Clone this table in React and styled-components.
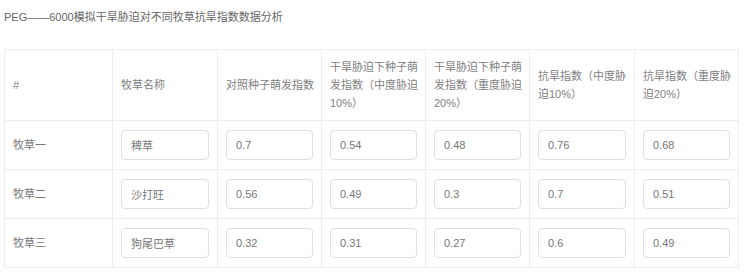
import React from "react";
import styled, { createGlobalStyle } from "styled-components";

const GlobalStyle = createGlobalStyle`
  body {
    margin: 0;
    background: #fff;
    font-family: "Liberation Sans", "Noto Sans CJK SC", sans-serif;
  }
`;

const headers = [
  "#",
  "牧草名称",
  "对照种子萌发指数",
  "干旱胁迫下种子萌发指数（中度胁迫10%）",
  "干旱胁迫下种子萌发指数（重度胁迫20%）",
  "抗旱指数（中度胁迫10%）",
  "抗旱指数（重度胁迫20%）",
];

const widths = [108, 105, 104, 104, 104, 105, 104];

const rows = [
  { label: "牧草一", values: ["稗草", "0.7", "0.54", "0.48", "0.76", "0.68"] },
  { label: "牧草二", values: ["沙打旺", "0.56", "0.49", "0.3", "0.7", "0.51"] },
  { label: "牧草三", values: ["狗尾巴草", "0.32", "0.31", "0.27", "0.6", "0.49"] },
];

function App() {
  return (
    <Page>
      <GlobalStyle />
      <Title>PEG——6000模拟干旱胁迫对不同牧草抗旱指数数据分析</Title>
      <Table>
        <colgroup>
          {widths.map((w, i) => (
            <col key={i} style={{ width: w }} />
          ))}
        </colgroup>
        <thead>
          <tr>
            {headers.map((h) => (
              <Th key={h}>{h}</Th>
            ))}
          </tr>
        </thead>
        <tbody>
          {rows.map(({ label, values }) => (
            <tr key={label}>
              <Td>{label}</Td>
              {values.map((v, i) => (
                <Td key={i}>
                  <Input defaultValue={v} />
                </Td>
              ))}
            </tr>
          ))}
        </tbody>
      </Table>
    </Page>
  );
}

export default App;

const Page = styled.div`
  padding: 8px 10px 0 4px;
`;

const Title = styled.div`
  font-size: 11px;
  line-height: 18px;
  color: #666;
  margin-bottom: 23px;
`;

const Table = styled.table`
  width: 735px;
  table-layout: fixed;
  border-collapse: collapse;
  font-size: 11px;
  color: #777;
`;

const Th = styled.th`
  border: 1px solid #ebedf0;
  padding: 8px 4px 8px 8px;
  line-height: 18px;
  height: 54px;
  text-align: left;
  font-weight: normal;
  color: #808080;
  vertical-align: middle;
`;

const Td = styled.td`
  border: 1px solid #ebedf0;
  padding: 9px 8px;
  line-height: 18px;
  vertical-align: middle;
`;

const Input = styled.input`
  display: block;
  box-sizing: border-box;
  width: 100%;
  height: 30px;
  border: 1px solid #dcdfe3;
  border-radius: 4px;
  padding: 0 9px;
  font-family: inherit;
  font-size: 11px;
  color: #777;
  background: #fff;
  outline: none;
`;
